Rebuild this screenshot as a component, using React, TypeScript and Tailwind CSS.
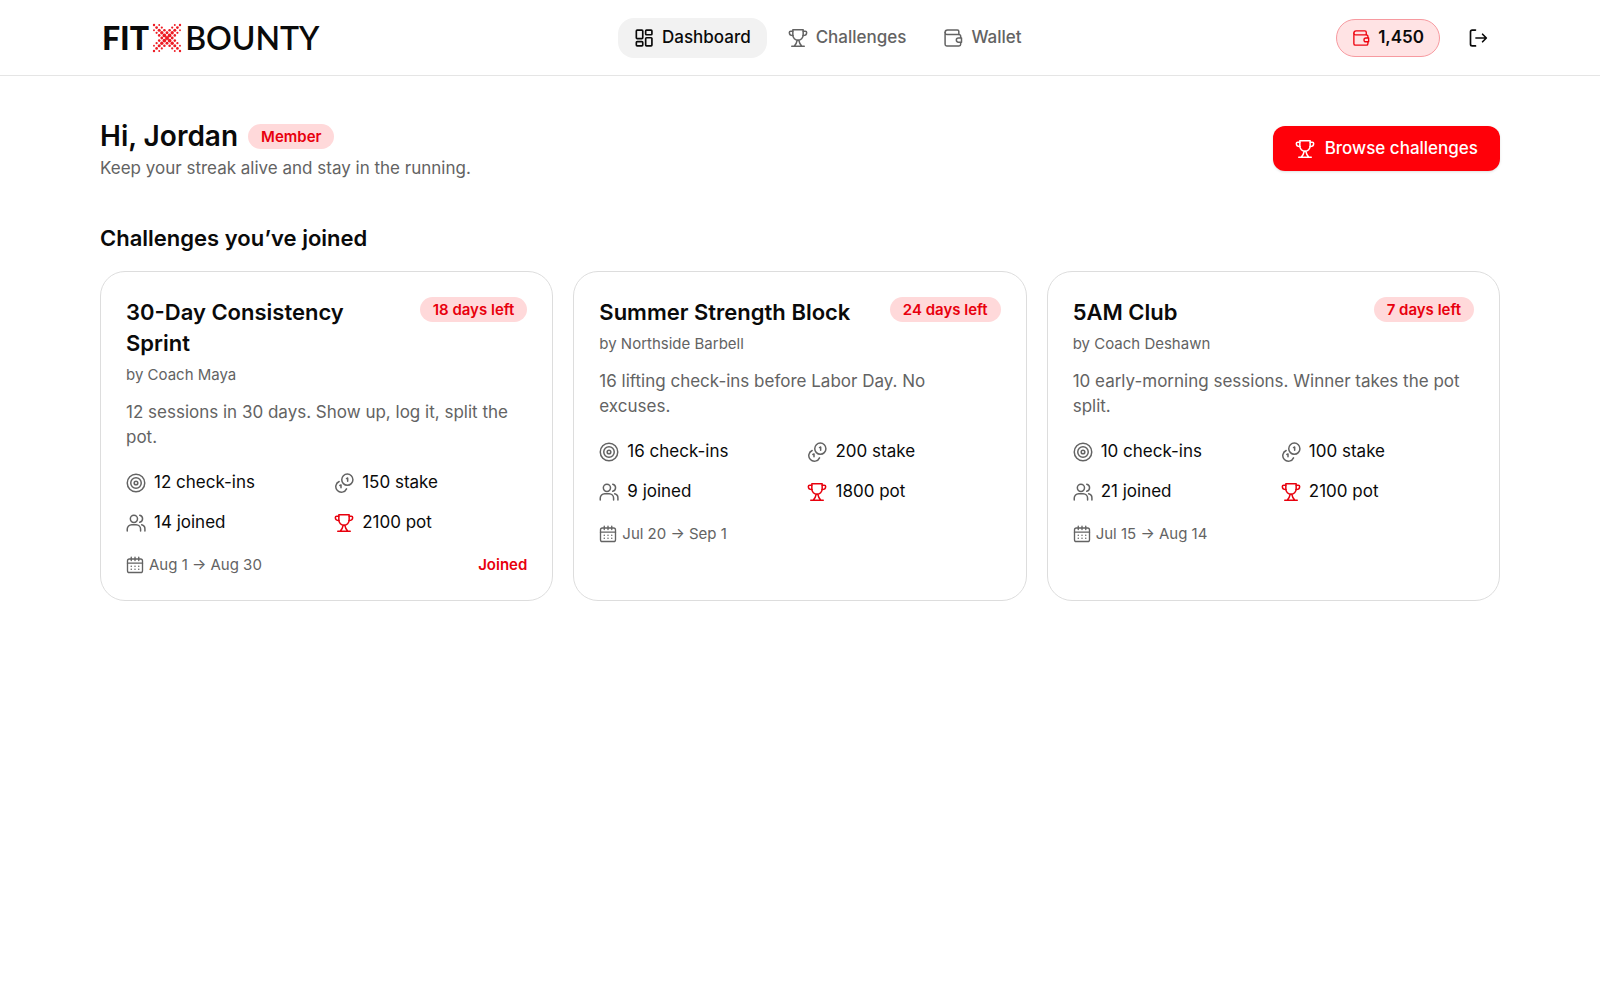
import type { ReactNode } from 'react';

type IconProps = { className?: string };

function Icon({ className, strokeWidth = 1.8, children }: IconProps & { strokeWidth?: number; children: ReactNode }) {
    return (
        <svg
            viewBox="0 0 24 24"
            fill="none"
            stroke="currentColor"
            strokeWidth={strokeWidth}
            strokeLinecap="round"
            strokeLinejoin="round"
            aria-hidden="true"
            className={className}
        >
            {children}
        </svg>
    );
}

const DashboardIcon = ({ className }: IconProps) => (
    <Icon className={className} strokeWidth={2}>
        <rect x="2.8" y="2.5" width="7.7" height="10.3" rx="1" />
        <rect x="14" y="2.5" width="7.5" height="5.6" rx="1" />
        <rect x="2.8" y="16.4" width="7.7" height="5.1" rx="1" />
        <rect x="14" y="11.7" width="7.5" height="9.8" rx="1" />
    </Icon>
);

const TrophyIcon = ({ className }: IconProps) => (
    <Icon className={className}>
        <path d="M5.8 2h12.4v6.5c0 3.6-2.8 6.3-6.2 6.3s-6.2-2.7-6.2-6.3V2Z" />
        <path d="M5.8 3.8H3.2c-.9 0-1.6.6-1.6 1.5 0 2.2 1.6 3.7 4.4 3.7M18.2 3.8h2.6c.9 0 1.6.6 1.6 1.5 0 2.2-1.6 3.7-4.4 3.7" />
        <path d="M11 14.8c-.4 2.6-1.6 4.8-3.6 7M13 14.8c.4 2.6 1.6 4.8 3.6 7M4.5 22h15" />
    </Icon>
);

const WalletIcon = ({ className }: IconProps) => (
    <Icon className={className}>
        <path d="M2.5 5.5v14c0 1.1.9 2 2 2h14.7c1.1 0 2-.9 2-2V9.8c0-1.1-.9-2-2-2H4.8c-1.3 0-2.3-1-2.3-2.3Z" />
        <path d="M2.5 5.5c0-1.7 1.3-3 3-3h11.7c1 0 1.8.8 1.8 1.8v3.5" />
        <path d="M22.2 12h-3.7a2.5 2.5 0 0 0 0 5h3.7v-5Z" fill="var(--clasp, white)" />
    </Icon>
);

const LogoutIcon = ({ className }: IconProps) => (
    <Icon className={className} strokeWidth={2}>
        <path d="M9 2.5H5c-1.1 0-2 .9-2 2v15c0 1.1.9 2 2 2h4" />
        <path d="M9.5 12h12M17.5 7.5 22 12l-4.5 4.5" />
    </Icon>
);

const TargetIcon = ({ className }: IconProps) => (
    <Icon className={className}>
        <circle cx="12" cy="12" r="10.5" />
        <circle cx="12" cy="12" r="6.3" />
        <circle cx="12" cy="12" r="2.2" />
    </Icon>
);

const CoinsIcon = ({ className }: IconProps) => (
    <Icon className={className}>
        <circle cx="16" cy="8" r="6.7" />
        <path d="M6.2 10.2a6.7 6.7 0 1 0 8.8 8.8" />
        <path d="M15 6.7 16.4 6v4M7 15l1.4-.7v3.5" />
    </Icon>
);

const UsersIcon = ({ className }: IconProps) => (
    <Icon className={className}>
        <circle cx="9.5" cy="7" r="4.3" />
        <path d="M1.5 21.5v-2.2a5.3 5.3 0 0 1 5.3-5.3h5.4a5.3 5.3 0 0 1 5.3 5.3v2.2" />
        <path d="M16.5 2.8a4.3 4.3 0 0 1 0 8.4M18.8 14.2a5 5 0 0 1 3.9 5v2.3" />
    </Icon>
);

const CalendarIcon = ({ className }: IconProps) => (
    <Icon className={className}>
        <rect x="2" y="4" width="20" height="18" rx="2.5" />
        <path d="M7 1.5V6M17 1.5V6M12 1.5V6M2 9.5h20" />
        <path d="M7 13.8h.01M12 13.8h.01M17 13.8h.01M7 17.8h.01M12 17.8h.01M17 17.8h.01" strokeWidth={2} />
    </Icon>
);

// Halftone X: dots are largest in the middle and shrink along and across the arms
const logoDots: { x: number; y: number; r: number }[] = [];
for (let i = -5; i <= 5; i++) {
    for (let j = -5; j <= 5; j++) {
        if ((i + j) % 2 !== 0) continue;
        const spread = Math.abs(Math.abs(i) - Math.abs(j));
        const reach = Math.max(Math.abs(i), Math.abs(j));
        if (spread > 2) continue;
        const r = 2 - reach * 0.16 - spread * 0.12;
        logoDots.push({ x: 15 + i * 2.6, y: 15 + j * 2.6, r });
    }
}

function Logo() {
    return (
        <a
            href="#"
            aria-label="FitXBounty home"
            className="flex items-center pl-0.5 font-[Lato,sans-serif] text-[32px] leading-10 text-neutral-950"
        >
            <span className="font-black">FIT</span>
            <svg viewBox="0 0 30 30" className="mx-[3px] size-[30px] text-[#ed1c24]" fill="currentColor" aria-hidden="true">
                {logoDots.map(dot => (
                    <circle key={`${dot.x}-${dot.y}`} cx={dot.x} cy={dot.y} r={dot.r} />
                ))}
            </svg>
            <span className="font-semibold">BOUNTY</span>
        </a>
    );
}

const navItems = [
    { label: 'Dashboard', icon: DashboardIcon, active: true },
    { label: 'Challenges', icon: TrophyIcon, active: false },
    { label: 'Wallet', icon: WalletIcon, active: false },
];

function Header() {
    return (
        <header className="border-b border-neutral-200 px-6">
            <div className="mx-auto flex h-[75px] max-w-[1400px] items-center justify-between">
                <Logo />
                <nav className="flex items-center gap-[5px]">
                    {navItems.map(({ label, icon: NavIcon, active }) => (
                        <a
                            key={label}
                            href="#"
                            aria-current={active ? 'page' : undefined}
                            className={
                                active
                                    ? 'flex h-10 items-center gap-2 rounded-2xl bg-[#f2f2f2] px-4 font-medium text-neutral-950'
                                    : 'flex h-10 items-center gap-2 rounded-2xl px-4 font-medium text-[#636363]'
                            }
                        >
                            <NavIcon className="size-5" />
                            {label}
                        </a>
                    ))}
                </nav>
                <div className="flex items-center gap-[15px]">
                    <a
                        href="#"
                        className="flex h-[38px] items-center gap-2 rounded-full border border-[#f79aa0] bg-[#ffe3e4] px-[15px] font-semibold text-neutral-950"
                    >
                        <WalletIcon className="size-[18px] text-[#ee0510] [--clasp:#ffe3e4]" />
                        1,450
                    </a>
                    <button type="button" aria-label="Log out" className="flex size-[45px] items-center justify-center">
                        <LogoutIcon className="size-5" />
                    </button>
                </div>
            </div>
        </header>
    );
}

function Badge({ children }: { children: ReactNode }) {
    return (
        <span className="flex h-[25px] shrink-0 items-center rounded-full bg-[#ffd9da] px-[13px] text-[15px] font-semibold text-[#e8000d]">
            {children}
        </span>
    );
}

type Challenge = {
    title: string;
    host: string;
    description: string;
    daysLeft: number;
    checkIns: number;
    stake: number;
    members: number;
    pot: number;
    dates: string;
    joined?: boolean;
};

const challenges: Challenge[] = [
    {
        title: '30-Day Consistency Sprint',
        host: 'Coach Maya',
        description: '12 sessions in 30 days. Show up, log it, split the pot.',
        daysLeft: 18,
        checkIns: 12,
        stake: 150,
        members: 14,
        pot: 2100,
        dates: 'Aug 1 → Aug 30',
        joined: true,
    },
    {
        title: 'Summer Strength Block',
        host: 'Northside Barbell',
        description: '16 lifting check-ins before Labor Day. No excuses.',
        daysLeft: 24,
        checkIns: 16,
        stake: 200,
        members: 9,
        pot: 1800,
        dates: 'Jul 20 → Sep 1',
    },
    {
        title: '5AM Club',
        host: 'Coach Deshawn',
        description: '10 early-morning sessions. Winner takes the pot split.',
        daysLeft: 7,
        checkIns: 10,
        stake: 100,
        members: 21,
        pot: 2100,
        dates: 'Jul 15 → Aug 14',
    },
];

function ChallengeCard({ challenge }: { challenge: Challenge }) {
    const stats = [
        { icon: TargetIcon, text: `${challenge.checkIns} check-ins` },
        { icon: CoinsIcon, text: `${challenge.stake} stake` },
        { icon: UsersIcon, text: `${challenge.members} joined` },
        { icon: TrophyIcon, text: `${challenge.pot} pot`, accent: true },
    ];

    return (
        <article className="rounded-[25px] border border-neutral-300/80 p-[25px]">
            <div className="flex items-start justify-between gap-4">
                <h3 className="text-[22px] leading-[31px] font-semibold">{challenge.title}</h3>
                <Badge>{`${challenge.daysLeft} days left`}</Badge>
            </div>
            <p className="mt-1.5 text-[15px] leading-5 text-[#636363]">{`by ${challenge.host}`}</p>
            <p className="mt-[15px] text-[#636363]">{challenge.description}</p>
            <ul className="mt-5 grid grid-cols-2 gap-[15px]">
                {stats.map(({ icon: StatIcon, text, accent }) => (
                    <li key={text} className="flex items-center gap-2">
                        <StatIcon className={accent ? 'size-5 text-[#e8000d]' : 'size-5 text-[#636363]'} />
                        {text}
                    </li>
                ))}
            </ul>
            <div className="mt-5 flex items-center justify-between text-[15px] leading-5">
                <span className="flex items-center gap-[5px] text-[#636363]">
                    <CalendarIcon className="size-[18px]" />
                    {challenge.dates}
                </span>
                {challenge.joined && <span className="font-semibold text-[#e8000d]">Joined</span>}
            </div>
        </article>
    );
}

export default function App() {
    return (
        <div className="min-h-screen bg-white font-[Inter,sans-serif] text-[17px] leading-[25px] text-neutral-950">
            <Header />
            <main className="px-6 py-10">
                <div className="mx-auto max-w-[1400px]">
                    {/* Greeting */}
                    <div className="flex items-center justify-between">
                        <div>
                            <div className="flex items-center gap-2.5">
                                <h1 className="text-[28px] leading-10 font-semibold">Hi, Jordan</h1>
                                <Badge>Member</Badge>
                            </div>
                            <p className="text-[#636363]">Keep your streak alive and stay in the running.</p>
                        </div>
                        <button
                            type="button"
                            className="flex h-[45px] items-center gap-2.5 rounded-xl bg-[#ff0009] px-[22px] font-medium text-white shadow-sm"
                        >
                            <TrophyIcon className="size-5" />
                            Browse challenges
                        </button>
                    </div>

                    {/* Joined challenges */}
                    <section className="mt-10">
                        <h2 className="text-[22px] leading-[35px] font-semibold">Challenges you’ve joined</h2>
                        <div className="mt-[15px] grid grid-cols-1 gap-5 lg:grid-cols-3">
                            {challenges.map(challenge => (
                                <ChallengeCard key={challenge.title} challenge={challenge} />
                            ))}
                        </div>
                    </section>
                </div>
            </main>
        </div>
    );
}
